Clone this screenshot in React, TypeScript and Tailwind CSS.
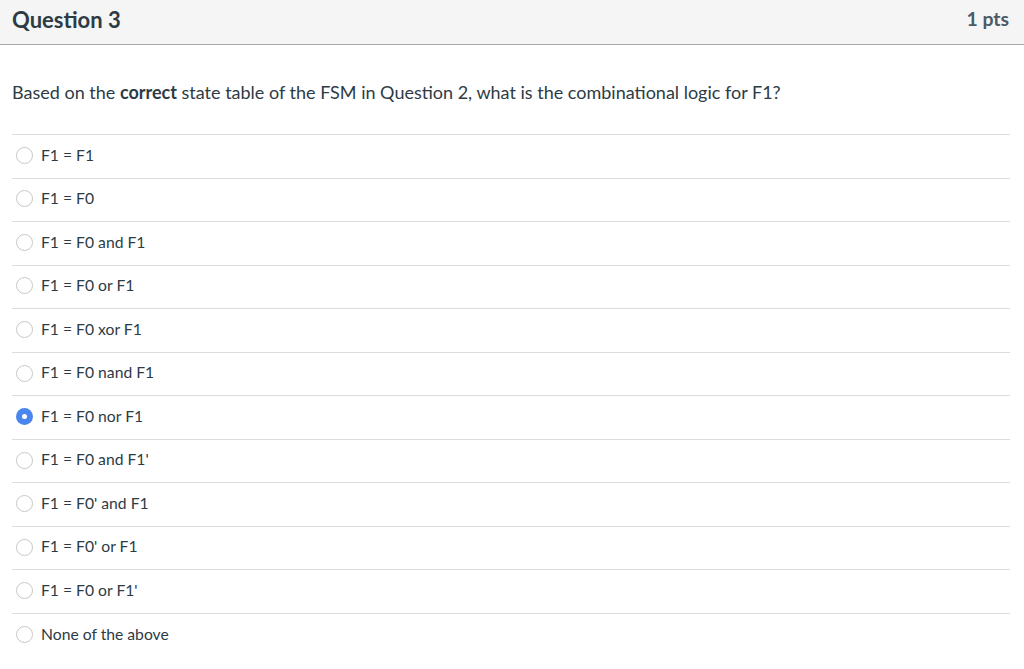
const options = [
  'F1 = F1',
  'F1 = F0',
  'F1 = F0 and F1',
  'F1 = F0 or F1',
  'F1 = F0 xor F1',
  'F1 = F0 nand F1',
  'F1 = F0 nor F1',
  "F1 = F0 and F1'",
  "F1 = F0' and F1",
  "F1 = F0' or F1",
  "F1 = F0 or F1'",
  'None of the above',
]

const selected = 6

function Radio({ checked }: { checked: boolean }) {
  if (checked) {
    return (
      <span className="flex h-[17px] w-[17px] shrink-0 items-center justify-center rounded-full bg-[#4a86ee]">
        <span className="h-[5px] w-[5px] rounded-full bg-white" />
      </span>
    )
  }
  return <span className="h-[17px] w-[17px] shrink-0 rounded-full border border-[#c7c7c7] bg-white" />
}

export default function App() {
  return (
    <div className="min-h-[669px] bg-white font-['Lato','Noto_Sans',sans-serif] text-[#2d3b45]">
      <div className="flex h-[45px] items-center justify-between border-b border-[#a8a8a8] bg-[#f5f5f5] pb-[6px] pl-3 pr-[15px]">
        <h2 className="text-[22px] font-bold">Question 3</h2>
        <span className="text-[19.4px] font-bold text-[#4b5a65]">1 pts</span>
      </div>

      <div className="pl-3 pr-[14px]">
        <p className="pt-[35px] pb-[30px] text-[18px] leading-[24px]">
          Based on the <strong>correct</strong> state table of the FSM in Question 2, what is the combinational logic for F1?
        </p>

        <div>
          {options.map((opt, i) => (
            <label
              key={opt}
              className="flex h-[43.55px] items-center gap-[8px] border-t border-[#dcdcdc] pb-[2px] pl-1 text-[15.7px]"
            >
              <Radio checked={i === selected} />
              <span>{opt}</span>
            </label>
          ))}
        </div>
      </div>
    </div>
  )
}
